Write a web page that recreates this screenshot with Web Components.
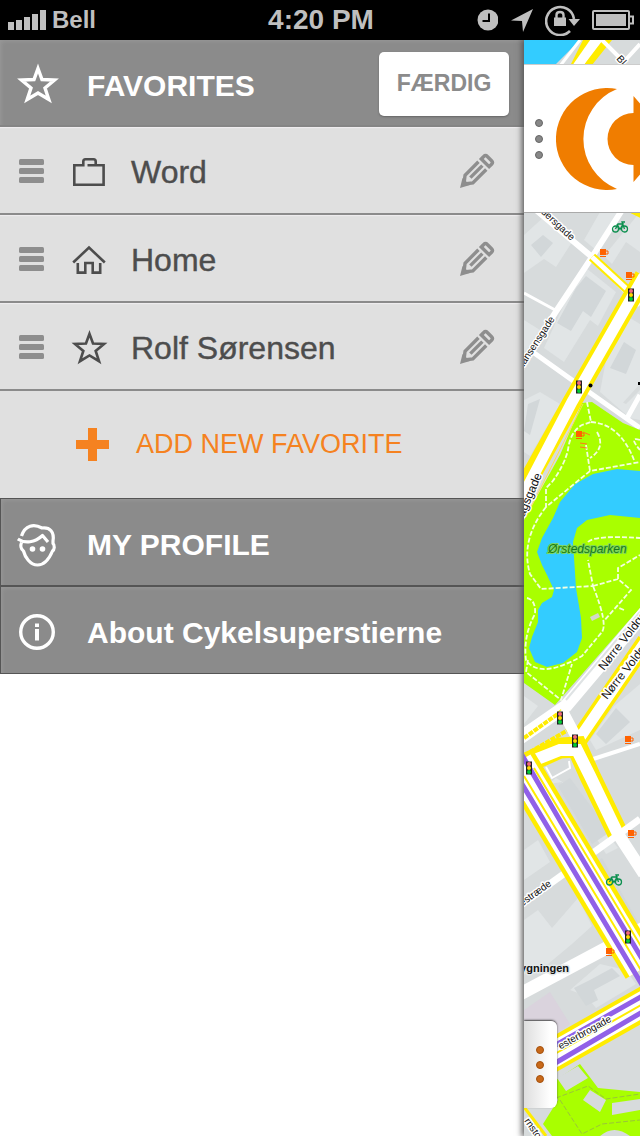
<!DOCTYPE html>
<html lang="da">
<head>
<meta charset="utf-8">
<meta name="viewport" content="width=device-width, initial-scale=1">
<title>Favorites</title>
<style>
  body { margin: 0; background: #fff; font-family: "Liberation Sans", Arial, sans-serif; }
</style>
</head>
<body>
<bike-app></bike-app>

<script>
const define = (name, html) => {
  const template = document.createElement('template');
  template.innerHTML = html;
  customElements.define(name, class extends HTMLElement {
    constructor() {
      super();
      this.attachShadow({ mode: 'open' }).append(template.content.cloneNode(true));
    }
  });
};

/* ---- icons ---- */
const star = (size, w) => `<svg width="${size}" height="${size}" viewBox="0 0 42 42"><path fill="none" stroke="currentColor" stroke-width="${w}" d="M21 5.500L25 16.500L37.500 17L28 25L31.800 36.500L21 30L10.200 36.500L14 25L4.500 17L17 16.500Z"/></svg>`;
const ICONS = {
  star: star(42, 3.4),
  starOutline: star(37, 3),
  briefcase: '<svg width="34" height="30" viewBox="0 0 34 30"><path fill="none" stroke="currentColor" stroke-width="2.600" d="M15.500 8.200H31.600V27.700H2.300V8.200H11.300V4.500Q11.300 2.300 13.500 2.300H21.500Q23.700 2.300 23.700 4.500V8"/></svg>',
  home: '<svg width="34" height="30" viewBox="0 0 34 30"><g fill="none" stroke="currentColor" stroke-width="2.600"><path d="M1.200 17.500L17 2.500L32.800 17.500"/><path d="M5.800 18V27.600H13.300V18H20.700V27.600H28.200V18"/></g></svg>',
  plus: '<svg width="33" height="33" viewBox="0 0 33 33"><path fill="currentColor" d="M12 0h9v12h12v9H21v12h-9V21H0v-9h12z"/></svg>',
  pencil: '<svg width="34" height="34" viewBox="0 0 34 34"><g transform="rotate(45 17 17)" fill="none" stroke="currentColor" stroke-width="3.400"><path d="M11.500 3V.5Q11.500 -2 14 -2H20Q22.500 -2 22.500 .5V4H11.500Z"/><path d="M11.500 8V27L17 34L22.500 27V8M17 8V25"/></g><path fill="currentColor" d="M1 33L3.500 23L11 30Z"/></svg>',
  grip: '<svg width="26" height="25" viewBox="0 0 26 25" fill="currentColor"><rect width="25" height="6" rx="1.500"/><rect y="9" width="25" height="6" rx="1.500"/><rect y="18" width="25" height="6" rx="1.500"/></svg>',
  face: '<svg width="40" height="44" viewBox="0 0 40 44"><g fill="none" stroke="currentColor" stroke-width="3.200" stroke-linejoin="round"><path d="M4.500 13C8 2 17 .5 25 5C33 4 37.500 9 36 18L36 20.500C38 22 37.500 27 35.500 28C33 34 29 42 20.500 42C13 42 8 34 6.500 28C3.500 26 3.500 22 4.500 19.500"/><path d="M.8 16C8 21 18 19.500 25.500 12.500L31 19" /></g><circle cx="15.500" cy="26" r="2.800" fill="currentColor"/><circle cx="25.500" cy="26" r="2.800" fill="currentColor"/></svg>',
  info: '<svg width="38" height="38" viewBox="0 0 38 38"><circle cx="19" cy="18" r="16.300" fill="none" stroke="currentColor" stroke-width="3.400"/><path fill="currentColor" d="M17 9.500h4v3.500h-4zM17 15h4v11.500h-4z"/></svg>'
};
customElements.define('app-icon', class extends HTMLElement {
  constructor() { super(); this.attachShadow({ mode: 'open' }); }
  connectedCallback() {
    this.shadowRoot.innerHTML = `<style>:host{display:flex;align-items:center;justify-content:center;flex:none} svg{display:block;overflow:visible}</style>${ICONS[this.getAttribute('name')]}`;
  }
});

/* ---- status bar ---- */
define('status-bar', `
<style>
  :host { display: grid; grid-template-columns: 1fr auto 1fr; align-items: center; height: 40px; padding: 0 6px 0 8px; background: #000; color: #bfbfbf; font-weight: bold; }
  div { display: flex; align-items: center; gap: 12px; }
  .left { gap: 6px; font-size: 24px; }
  .time { font-size: 28px; }
  .right { justify-content: flex-end; }
  svg { display: block; }
</style>
<div class="left">
  <svg width="38" height="20" viewBox="0 0 38 20" fill="currentColor"><path d="M0 12h6v8H0zM8 10h6v10H8zM16 7h6v13h-6zM24 4h6v16h-6zM32 0h6v20h-6z"/></svg>
  <span>Bell</span>
</div>
<div class="time">4:20 PM</div>
<div class="right">
  <svg width="22" height="22" viewBox="0 0 22 22"><circle cx="12" cy="11" r="10.500" fill="currentColor"/><path d="M13 4.500V12H6.500" fill="none" stroke="#000" stroke-width="2"/></svg>
  <svg width="23" height="23" viewBox="0 0 23 23"><path fill="currentColor" d="M23 0L13 23L12 12L1 11.500Z"/></svg>
  <svg width="35" height="32" viewBox="0 0 35 32"><path d="M25 27A14 14 0 1 1 29 15" fill="none" stroke="currentColor" stroke-width="2.600"/><path fill="currentColor" d="M23.500 15H35L29 22ZM9 13.500H21V22H9Z"/><path d="M11.500 14V11Q11.500 8 15 8T18.500 11V14" fill="none" stroke="currentColor" stroke-width="2.400"/></svg>
  <svg width="42" height="20" viewBox="0 0 42 20"><rect x="1" y="1" width="36" height="18" rx="1" fill="none" stroke="currentColor" stroke-width="2"/><path fill="currentColor" d="M4 4h30v12H4z"/><path d="M38 6.500h3v7h-3" fill="none" stroke="currentColor" stroke-width="2"/></svg>
</div>`);

/* ---- drawer rows ---- */
define('drawer-header', `
<style>
  :host { display: flex; align-items: center; height: 87px; box-sizing: border-box; padding: 2px 15px 0 17px; background: #8b8b8b; color: #fff; border-bottom: 2px solid #858585; box-shadow: inset 3px 3px 4px -2px #999; }
  h1 { flex: 1; margin: 0 0 0 28px; padding-top: 4px; font-size: 30px; line-height: 36px; }
  button { width: 130px; height: 64px; border: 0; border-radius: 5px; background: #fff; color: #8b8b8b; font: bold 23px "Liberation Sans", Arial, sans-serif; box-shadow: 0 1px 2px #666; }
</style>
<app-icon name="star"></app-icon>
<h1><slot></slot></h1>
<button type="button"><slot name="action"></slot></button>`);

customElements.define('favorite-row', class extends HTMLElement {
  constructor() { super(); this.attachShadow({ mode: 'open' }); }
  connectedCallback() {
    this.shadowRoot.innerHTML = `
<style>
  :host { display: flex; align-items: center; height: 88px; box-sizing: border-box; padding: 3px 27px 0 15px; background: #e0e0e0; color: #4d4d4d; border-bottom: 2px solid #8b8b8b; box-shadow: inset 0 2px 1px -1px #f0eef0; }
  button { display: flex; padding: 4px; border: 0; background: none; color: #8e8e8e; }
  .kind { width: 42px; margin: 0 21px 0 19px; }
  span { flex: 1; font-size: 32px; line-height: 40px; -webkit-text-stroke: .4px; }
</style>
<button type="button" aria-label="Reorder"><app-icon name="grip"></app-icon></button>
<app-icon class="kind" name="${this.getAttribute('icon')}"></app-icon>
<span><slot></slot></span>
<button type="button" aria-label="Edit"><app-icon name="pencil"></app-icon></button>`;
  }
});

define('add-favorite', `
<style>
  :host { display: block; background: #e0e0e0; }
  button { display: flex; align-items: center; gap: 27px; width: 100%; height: 107px; border: 0; padding: 0 0 0 76px; background: none; color: #f58220; font: 27px "Liberation Sans", Arial, sans-serif; }
</style>
<button type="button"><app-icon name="plus"></app-icon><slot></slot></button>`);

customElements.define('menu-link', class extends HTMLElement {
  constructor() { super(); this.attachShadow({ mode: 'open' }); }
  connectedCallback() {
    this.shadowRoot.innerHTML = `
<style>
  :host { display: block; }
  a { display: flex; align-items: center; height: 88px; box-sizing: border-box; padding: 5px 0 0 15px; background: #8b8b8b; color: #fff; border: 1px solid #555; border-right: 0; box-shadow: inset 3px 3px 4px -2px #999; font-size: 30px; font-weight: bold; text-decoration: none; }
  app-icon { width: 42px; margin-right: 29px; }
</style>
<a href="#"><app-icon name="${this.getAttribute('icon')}"></app-icon><slot></slot></a>`;
  }
});

/* ---- map ---- */
const light = (x, y) => `<g transform="translate(${x} ${y})"><rect x="-3" y="-6.500" width="6" height="13" fill="#222"/><circle cy="-4" r="2" fill="#f4697b"/><circle r="2" fill="#ffd800"/><circle cy="4" r="2" fill="#0c3"/></g>`;
const cup = (x, y) => `<g transform="translate(${x} ${y})"><path fill="#ff6200" d="M-4-4H2V2H-4ZM-4 3H2V4H-4Z"/><path d="M2-2H4V1H2" fill="none" stroke="#ff6200"/></g>`;
const bike = (x, y) => `<g transform="translate(${x} ${y})" fill="none" stroke="#0a8f4d" stroke-width="1.300"><circle cx="-4.500" cy="2" r="3"/><circle cx="4.500" cy="2" r="3"/><path d="M-4.500 2L-2-3H3L0 2.500L-3-3M4.500 2L2-5H5"/></g>`;
define('city-map', `
<style>
  :host { display: block; overflow: hidden; background: #d7dbdc; }
  svg { display: block; width: 100%; height: 100%; }
  text { font-family: "Liberation Sans", Arial, sans-serif; font-size: 10px; fill: #111; stroke: #fff; stroke-width: 3px; stroke-linejoin: round; paint-order: stroke; }
  .bold { font-size: 11px; font-weight: bold; stroke: #e4e8e9; }
  .park { font-size: 12px; font-style: italic; fill: #187a18; stroke: #7fd65a; stroke-width: 2px; }
  .big { font-size: 12px; }
</style>
<svg viewBox="524 40 116 1096" preserveAspectRatio="xMinYMin slice" role="img" aria-label="Map">
  <path fill="#d7dbdc" d="M524 40h116v1096H524z"/>
  <path fill="#e1e5e6" d="M524 235l22-20 28 24-18 28-12-8-20 14zM600 212l20 0-24 38-12-10zM566 300l20-32 30 24-18 34-8-6-26 42-20-14zM606 360l24-42 10 6v60l-20 22-20-14zM524 320l16 10-16 24zM640 212v40l-14-10-14 22-8-8zM524 400l16-8 20 12-30 52-6-4zM600 392l26 12 14-14v30l-10-2zM590 740l24-34 26-22v46l-44 20zM556 778l16 10 46 60-12 6-44-72-14 2zM524 850l14-10 12 22-26 18zM524 920l14-10 14 18 26-30 14 28-20 18-24 20-24 4zM570 990l30-26 26 6 10 14-40 24-10-12zM524 696l14 10-14 18z"/>
  <path fill="#d2d7d9" d="M531 245l12-10 10 8-12 14zM576 288l10-12 20 15-15 26-8-6-12 20-14-8zM610 368l14-26 12 8-10 24zM558 786l12-8 40 54-18 12zM588 868l14-10 36 64-8 4zM574 988l16-8 22-12 8 8-26 14 4 10-12 6zM596 734l20-26 14 14-24 22zM528 404l12-5-10 36-6-4z"/>
  <path fill="#dad3dd" d="M524 1010l26-18 20 32-40 30-6-6z"/>

  <!-- harbour corner and streets above the top bar -->
  <path fill="#3cf" d="M524 40h56l-26 26h-30z"/>
  <path fill="#ffec00" d="M583 40h29l-24 30h-20z"/>
  <path d="M580 40L560 66M604 36L578 70" stroke="#fff" stroke-width="3"/>
  <path d="M597 38L576 68" stroke="#fff" stroke-width="9"/>
  <path d="M602 40L622 60M640 44L620 66" stroke="#fff" stroke-width="4"/>

  <!-- side streets -->
  <g fill="none" stroke="#fff">
    <path stroke-width="6" d="M530 205L592 257L640 305M624 207L592 257L557 310L518 372"/>
    <path stroke-width="3" d="M524 293L557 311"/>
    <path stroke-width="5" d="M530 350L579 385L640 428M640 395L626 420"/>
  </g>
  <path d="M592 257L630 292" stroke="#ffec00" stroke-width="9"/>
  <path d="M592 257L630 292" stroke="#fff" stroke-width="5"/>
  <path d="M632 211L644 217" stroke="#ffec00" stroke-width="5"/>

  <!-- park and lake -->
  <path fill="#a9ff00" d="M582 403L592 402L623 423L640 430V608L555 705L524 683V520L560 455Z"/>
  <path fill="#3cf" d="M640 471L617 469L593 474L575 484L560 502L553 518L542 538L537 552L542 565L547 575L554 590L552 597L542 603L538 610L538 622L532 637L529 648L535 662L547 667L563 663L577 652L582 638L581 618L576 588L573 542L577 528L587 520L610 515L640 518Z"/>
  <g fill="none" stroke="#f4ffe0" stroke-width="1.800" stroke-dasharray="5 2">
    <path d="M587 402L591 422L582 425Q570 432 568 450Q564 466 552 482L546 488L546 507L590 471L640 462M591 422Q620 424 634 460M586 445L590 471M597 432Q606 448 590 458M546 507Q520 540 530 574L541 589L593 586L588 560M588 542Q594 535 640 538M593 586Q608 624 602 632L582 656Q540 680 526 660Q523 636 535 614Q536 600 527 598M593 586L618 579L631 590L603 622M618 579L618 568L640 555M624 610L619 608M528 660L526 672L561 700L572 664M640 440Q628 436 640 450"/>
  </g>
  <path fill="#d3d7ca" d="M590 617l8-4 2 4-8 4z"/>

  <!-- boulevard along the park -->
  <path d="M644 276L572 402L519 497" fill="none" stroke="#ffec00" stroke-width="19"/>
  <path d="M644 276L572 402L519 503" fill="none" stroke="#fff" stroke-width="11"/>
  <path d="M583 404L526 517" stroke="#ffe14d" stroke-width="1"/>

  <!-- northern boulevard -->
  <g fill="none">
    <path stroke="#fff" stroke-width="13" d="M646 611L566 706L520 738"/>
    <path stroke="#dfe3e4" stroke-width="2" d="M640 612L566 700"/>
    <path stroke="#ffec00" stroke-width="18" d="M646 641L577 742"/>
    <path stroke="#ffec00" stroke-width="4" stroke-dasharray="5 1" d="M524 738L562 711M530 752L568 730"/>
    <path stroke="#fff" stroke-width="11" d="M646 641L577 742M562 710L582 748"/>
    <path stroke="#fff" stroke-width="4" d="M587 761L640 744"/>
    <path stroke="#ffec00" stroke-width="21" d="M524 764L560 748L577 747L590 776L618 834"/>
    <path stroke="#fff" stroke-width="12" d="M522 765L560 750L577 750L590 776L618 834L644 874"/>
    <path stroke="#fff" stroke-width="2" d="M546 767L552 778L570 768L569 761"/>
    <path stroke="#fff" stroke-width="7" d="M522 904L640 819"/>
    <path stroke="#fff" stroke-width="13" d="M520 994L644 928"/>
    <path stroke="#ffec00" stroke-width="38" d="M518 762L642 969"/>
    <path stroke="#fff" stroke-width="29" d="M518 762L642 969"/>
    <path stroke="#ffec00" stroke-width="2" d="M524 776L642 972M534 768L642 948"/>
    <path stroke="#9160e8" stroke-width="5" d="M522 755L580 855L644 962M522 784L644 988"/>
  </g>

  <!-- Vesterbrogade -->
  <g fill="none">
    <path stroke="#ffec00" stroke-width="33" d="M530 1068L650 1000"/>
    <path stroke="#fff" stroke-width="25" d="M530 1068L650 1000"/>
    <path stroke="#ffec00" stroke-width="2" d="M530 1068L650 1000"/>
    <path stroke="#9160e8" stroke-width="5" d="M540 1054L644 995M540 1072L644 1011"/>
  </g>

  <path fill="#a9ff00" d="M550 1084L580 1064L598 1088L640 1092V1136H552L543 1124L558 1100Z"/>
  <path fill="#d7dbdc" d="M557 1078L578 1066L588 1078L566 1091ZM590 1090L606 1100L600 1112L583 1100ZM612 1103L640 1099V1110L612 1115ZM600 1136Q614 1124 630 1136Z"/>
  <path d="M560 1100L582 1134L602 1124L640 1120M556 1098L588 1086L606 1099L640 1094" fill="none" stroke="#9ac53a" stroke-dasharray="5 2"/>
  <path d="M524 1107L546 1136" stroke="#ffec00" stroke-width="3"/>

  ${bike(620, 227)}${bike(614, 880)}
  ${cup(604, 253)}${cup(630, 276)}${cup(580, 435)}${cup(629, 740)}${cup(632, 834)}${cup(610, 952)}
  <path d="M580 443l7 1M580 447l7 1M583 432l7 3" stroke="#ff7a1a"/>
  ${light(631, 295)}${light(579, 387)}${light(560, 718)}${light(575, 741)}${light(529, 768)}${light(628, 937)}
  <circle cx="590.500" cy="385.500" r="2"/>
  <path d="M638 382h3v3h-3z"/>

  <text transform="translate(616 59) rotate(48)">Bl</text>
  <text transform="translate(571 241) rotate(43)" text-anchor="end">dersgade</text>
  <text transform="translate(555 319) rotate(-57)" text-anchor="end">Nansensgade</text>
  <text class="big" transform="translate(542 475) rotate(-67)" text-anchor="end">agsgade</text>
  <text class="park" x="548" y="553">Ørstedsparken</text>
  <text class="big" transform="translate(604 671) rotate(-52)">Nørre Voldga</text>
  <text class="big" transform="translate(607 700) rotate(-52)">Nørre Voldga</text>
  <text transform="translate(552 885) rotate(-36)" text-anchor="end">estræde</text>
  <text class="bold" x="569" y="972" text-anchor="end">ygningen</text>
  <text transform="translate(612 1021) rotate(-29)" text-anchor="end">esterbrogade</text>
  <text transform="translate(524 1121) rotate(55)">rnsto</text>
</svg>`);

define('map-pane', `
<style>
  :host { display: grid; position: relative; overflow: hidden; }
  header { position: absolute; top: 24px; left: 0; right: 0; height: 149px; display: flex; align-items: center; gap: 12px; padding-left: 10px; background: #fff; border-bottom: 1px solid #aaa; border-top: 1px solid #ccc; box-sizing: border-box; overflow: hidden; }
  button { border: 0; padding: 0; background: none; display: block; }
  header button { flex: none; }
  svg { display: block; flex: none; }
  .tab { position: absolute; left: 0; bottom: 28px; width: 33px; height: 87px; padding-left: 11px; border-radius: 0 6px 6px 0; background: linear-gradient(90deg, #dedede, #fff 80%); box-shadow: 0 -1px 2px #444; }
</style>
<city-map></city-map>
<header>
  <button type="button" aria-label="Close menu"><svg width="10" height="42" viewBox="0 0 10 42" fill="#888" stroke="#666"><circle cx="5" cy="5" r="3.500"/><circle cx="5" cy="21" r="3.500"/><circle cx="5" cy="37" r="3.500"/></svg></button>
  <svg width="102" height="102" viewBox="0 0 102 102" fill="#f07d00"><path d="M61 1A51 51 0 1 0 61 101A54 54 0 0 1 61 1Z"/><path d="M77.500 8L102 36V66L77.500 94V77A26 26 0 0 1 77.500 25Z"/></svg>
</header>
<button class="tab" type="button" aria-label="Show details"><svg width="10" height="40" viewBox="0 0 10 40" fill="#c8691a" stroke="#a5500c"><circle cx="5" cy="5" r="3.500"/><circle cx="5" cy="20" r="3.500"/><circle cx="5" cy="34" r="3.500"/></svg></button>`);

define('bike-app', `
<style>
  :host { display: flex; flex-direction: column; min-height: 100vh; }
  main { flex: 1; display: flex; }
  nav { flex: 1; min-width: 0; }
  map-pane { flex: none; width: 116px; }
  .peek { display: flex; position: relative; box-shadow: -1px 0 6px 1px #555; clip-path: inset(0 0 0 -12px); }
</style>
<status-bar></status-bar>
<main>
  <nav>
    <drawer-header>FAVORITES<span slot="action">FÆRDIG</span></drawer-header>
    <favorite-row icon="briefcase">Word</favorite-row>
    <favorite-row icon="home">Home</favorite-row>
    <favorite-row icon="starOutline">Rolf Sørensen</favorite-row>
    <add-favorite>ADD NEW FAVORITE</add-favorite>
    <menu-link icon="face">MY PROFILE</menu-link>
    <menu-link icon="info">About Cykelsuperstierne</menu-link>
  </nav>
  <div class="peek"><map-pane></map-pane></div>
</main>`);
</script>
</body>
</html>
